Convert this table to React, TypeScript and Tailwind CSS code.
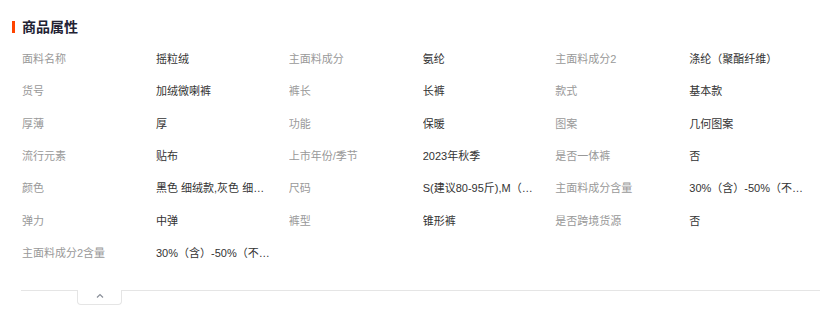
const attrs: [string, string][] = [
  ['面料名称', '摇粒绒'],
  ['主面料成分', '氨纶'],
  ['主面料成分2', '涤纶（聚酯纤维）'],
  ['货号', '加绒微喇裤'],
  ['裤长', '长裤'],
  ['款式', '基本款'],
  ['厚薄', '厚'],
  ['功能', '保暖'],
  ['图案', '几何图案'],
  ['流行元素', '贴布'],
  ['上市年份/季节', '2023年秋季'],
  ['是否一体裤', '否'],
  ['颜色', '黑色 细绒款,灰色 细绒款,杏色 细绒款'],
  ['尺码', 'S(建议80-95斤),M（建议95-105斤）'],
  ['主面料成分含量', '30%（含）-50%（不含）'],
  ['弹力', '中弹'],
  ['裤型', '锥形裤'],
  ['是否跨境货源', '否'],
  ['主面料成分2含量', '30%（含）-50%（不含）'],
]

export default function App() {
  return (
    <div
      className="h-[316px] w-[835px] bg-white"
      style={{ fontFamily: '"Liberation Sans", "Noto Sans CJK SC", sans-serif' }}
    >
      {/* Title */}
      <div className="flex items-center pl-[12px] pt-[17px]">
        <span className="h-[12px] w-[3px] bg-[#ff4400]" />
        <h3 className="ml-[7px] text-[14px] font-bold leading-[20px] text-[#222233]">商品属性</h3>
      </div>

      {/* Attribute grid */}
      <div className="ml-[22px] mt-[6px] grid w-[800px] grid-cols-3">
        {attrs.map(([label, value]) => (
          <div key={label} className="flex h-[32.33px] items-center text-[11px] leading-[16px]">
            <span className="w-[134px] shrink-0 truncate pr-[12px] text-[#999999]">{label}</span>
            <span className="w-[132px] shrink-0 truncate pr-[18px] text-[#333333]">{value}</span>
          </div>
        ))}
      </div>

      {/* Divider with collapse tab */}
      <div className="ml-[21px] mt-[21px] flex w-[799px]">
        <div className="w-[56px] border-t border-[#e5e5e5]" />
        <button className="flex h-[15px] w-[45px] items-start justify-center rounded-b-[4px] border-x border-b border-[#e5e5e5] pt-[3px]">
          <svg width="8" height="5" viewBox="0 0 8 5" fill="none">
            <polyline points="1,4.5 4,1.5 7,4.5" stroke="#8a8f99" strokeWidth="1.2" />
          </svg>
        </button>
        <div className="flex-1 border-t border-[#e5e5e5]" />
      </div>
    </div>
  )
}
